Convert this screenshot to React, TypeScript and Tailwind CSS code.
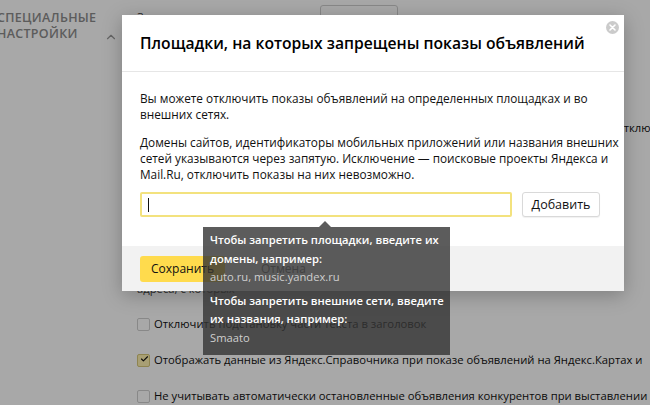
import { ChevronUp, Check } from 'lucide-react'

function Box({ checked }: { checked?: boolean }) {
  return (
    <span
      className={
        'flex h-[13px] w-[13px] shrink-0 items-center justify-center rounded-[2px] border ' +
        (checked ? 'border-[#d8c87a] bg-[#fff1b0]' : 'border-[#cfcfcf] bg-white')
      }
    >
      {checked && <Check size={16} strokeWidth={3} className="-mt-[3px] ml-[2px] text-[#111]" />}
    </span>
  )
}

function Row({ label, checked }: { label: string; checked?: boolean }) {
  return (
    <div className="flex h-[17px] items-center gap-[4px] whitespace-nowrap text-[11.25px] text-[#111]">
      <Box checked={checked} />
      <span>{label}</span>
    </div>
  )
}

export default function App() {
  return (
    <div className="relative h-[405px] w-[650px] overflow-hidden bg-white font-['Open_Sans',sans-serif]">
      {/* page behind the dialog */}
      <div className="flex">
        <div className="flex w-[137px] shrink-0 gap-[8px] pt-[10px]">
          <div className="-ml-[3px] text-[12.5px] font-semibold uppercase leading-[16px] tracking-[0.3px] text-[#8c8c8c]">
            Специальные
            <br />
            настройки
          </div>
          <ChevronUp size={14} className="mt-[20px] text-[#9a9a9a]" />
        </div>
        <div className="flex flex-1 flex-col">
          <div className="flex h-[20px] items-start">
            <span className="mt-[9px] text-[11.25px] text-[#444]">Запрещенные</span>
            <span className="ml-[104px] mt-[5px] h-[24px] w-[78px] rounded-[3px] border border-[#cfcfcf] bg-white" />
          </div>
          <div className="mt-[100px] whitespace-nowrap pl-[478px] text-[11.25px] text-[#111]">Отключить</div>
          <div className="mt-[144px] text-[11.25px] text-[#444]">адреса, с которых</div>
          <div className="mt-[18px] flex flex-col gap-[19px]">
            <Row label="Отключить подстановку части текста в заголовок" />
            <Row label="Отображать данные из Яндекс.Справочника при показе объявлений на Яндекс.Картах и" checked />
            <Row label="Не учитывать автоматически остановленные объявления конкурентов при выставлении ставок" />
          </div>
        </div>
      </div>

      {/* overlay */}
      <div className="absolute inset-0 bg-black/[0.34]" />

      {/* dialog */}
      <div className="absolute left-[122px] top-[15px] w-[502px] bg-white shadow-[0_4px_18px_rgba(0,0,0,0.25)]">
        <div className="relative border-b border-[#e6e6e6] px-[18px] pb-[17px] pt-[17px]">
          <h2 className="whitespace-nowrap text-[15.7px] font-semibold leading-[22px] text-[#000]">
            Площадки, на которых запрещены показы объявлений
          </h2>
          <span className="absolute right-[5px] top-[6px] flex h-[13px] w-[13px] items-center justify-center rounded-full bg-[#cbcbcb]">
            <svg width="7" height="7" viewBox="0 0 7 7">
              <path d="M1 1L6 6M6 1L1 6" stroke="white" strokeWidth="1.6" strokeLinecap="round" />
            </svg>
          </span>
        </div>
        <div className="whitespace-nowrap px-[18px] pb-[29px] pt-[18px] text-[11.8px] leading-[16px] text-[#111]">
          <p>
            Вы можете отключить показы объявлений на определенных площадках и во
            <br />
            внешних сетях.
          </p>
          <p className="mt-[12px]">
            Домены сайтов, идентификаторы мобильных приложений или названия внешних
            <br />
            сетей указываются через запятую. Исключение — поисковые проекты Яндекса и
            <br />
            Mail.Ru, отключить показы на них невозможно.
          </p>
          <div className="mt-[10px] flex gap-[10px]">
            <div className="flex h-[25px] w-[372px] items-center rounded-[2px] border-2 border-[#f3e27e] bg-white px-[6px]">
              <span className="h-[14px] w-px bg-[#111]" />
            </div>
            <button className="h-[25px] w-[78px] rounded-[3px] border border-[#d9d9d9] bg-white text-[12.5px] text-[#111] shadow-[0_1px_1px_rgba(0,0,0,0.06)]">
              Добавить
            </button>
          </div>
        </div>
        <div className="flex h-[45px] items-center gap-[36px] bg-[#f2f2f2] px-[18px]">
          <button className="h-[26px] rounded-[3px] bg-[#ffdb4d] px-[11px] text-[12px] text-[#111]">Сохранить</button>
          <span className="text-[12px] text-[#777]">Отмена</span>
        </div>
      </div>

      {/* tooltip */}
      <div className="absolute left-[203px] top-[227px] w-[247px] whitespace-nowrap bg-[#333]/80 px-[7px] pb-[8px] pt-[4px] text-[11.2px] leading-[18.5px] text-white">
        <span className="absolute -top-[6px] left-[116px] h-0 w-0 border-x-[6px] border-b-[6px] border-x-transparent border-b-[#333]/80" />
        <div className="font-semibold">
          Чтобы запретить площадки, введите их
          <br />
          домены, например:
        </div>
        <div className="text-[#cfcfcf]">auto.ru, music.yandex.ru</div>
        <div className="mt-[5px] font-semibold">
          Чтобы запретить внешние сети, введите
          <br />
          их названия, например:
        </div>
        <div className="text-[#cfcfcf]">Smaato</div>
      </div>
    </div>
  )
}
